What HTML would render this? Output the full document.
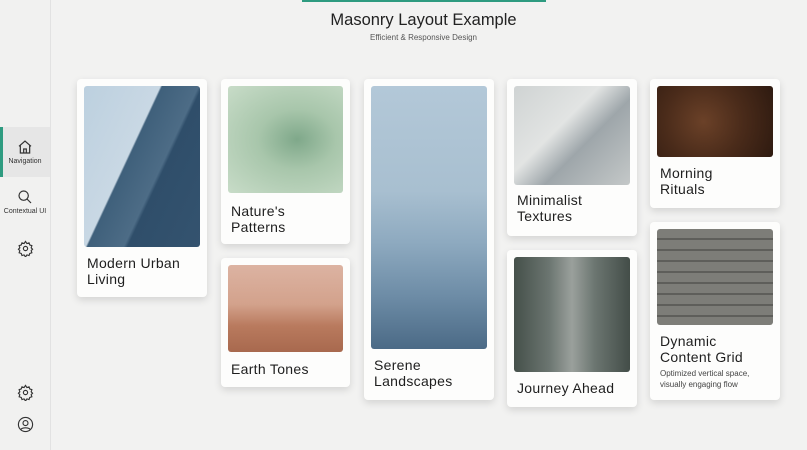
<!DOCTYPE html>
<html><head><style>
*{margin:0;padding:0;box-sizing:border-box}
body{width:807px;height:450px;background:#f2f2f1;font-family:"Liberation Sans",sans-serif;position:relative;overflow:hidden}
.side{position:absolute;left:0;top:0;width:51px;height:450px;border-right:1px solid #e2e2e2;background:#f1f1f0}
.ni{position:absolute;left:0;width:50px;text-align:center;font-size:7px;color:#333}
.ni svg{display:block;margin:0 auto 3px}
.card{position:absolute;background:#fdfdfc;border-radius:4px;box-shadow:0 3px 8px rgba(0,0,0,.13)}
.img{position:absolute;left:7px;top:7px;right:7px;border-radius:3px}
.t{position:absolute;left:10px;font-size:14px;line-height:16px;color:#1e1e1e;letter-spacing:.3px}
</style></head><body>
<div style="position:absolute;left:302px;top:0;width:244px;height:2px;background:#2e9b80"></div>
<div style="position:absolute;left:0;width:807px;top:11px;text-align:center;padding-left:40px;font-size:16.5px;color:#222">Masonry Layout Example</div>
<div style="position:absolute;left:0;width:807px;top:33px;text-align:center;padding-left:40px;font-size:8px;color:#555">Efficient &amp; Responsive Design</div>
<div class="side">
<div style="position:absolute;left:0;top:127px;width:50px;height:50px;background:#e6e6e6"></div>
<div style="position:absolute;left:0;top:127px;width:3px;height:50px;background:#2e9b80"></div>
<div class="ni" style="top:139px"><svg width="16" height="16" viewBox="0 0 24 24" fill="none" stroke="#333" stroke-width="1.8"><path d="M3 11L12 3l9 8M5 9v12h14V9M10 21v-6h4v6"/></svg>Navigation</div>
<div class="ni" style="top:189px"><svg width="16" height="16" viewBox="0 0 24 24" fill="none" stroke="#333" stroke-width="1.8"><circle cx="10" cy="10" r="7"/><path d="M15 15l6 6"/></svg>Contextual UI</div>
<div class="ni" style="top:240px"><svg width="17" height="17" viewBox="0 0 24 24" fill="none" stroke="#333" stroke-width="1.6"><circle cx="12" cy="12" r="3"/><path d="M12 2l2 3 3-1 1 3 3 1-1 3 2 2-2 2 1 3-3 1-1 3-3-1-2 3-2-3-3 1-1-3-3-1 1-3-2-2 2-2-1-3 3-1 1-3 3 1z"/></svg></div>
<div class="ni" style="top:384px"><svg width="17" height="17" viewBox="0 0 24 24" fill="none" stroke="#333" stroke-width="1.6"><circle cx="12" cy="12" r="3"/><path d="M12 2l2 3 3-1 1 3 3 1-1 3 2 2-2 2 1 3-3 1-1 3-3-1-2 3-2-3-3 1-1-3-3-1 1-3-2-2 2-2-1-3 3-1 1-3 3 1z"/></svg></div>
<div class="ni" style="top:416px"><svg width="17" height="17" viewBox="0 0 24 24" fill="none" stroke="#333" stroke-width="1.6"><circle cx="12" cy="12" r="10"/><circle cx="12" cy="10" r="3.5"/><path d="M5.5 19c2-3 11-3 13 0"/></svg></div>
</div>

<div class="card" style="left:77px;top:79px;width:130px;height:218px">
<div class="img" style="height:161px;background:linear-gradient(115deg,#bcd0df 0%,#c9d8e4 40%,#3f607b 41%,#4d6c86 60%,#2f4e6a 62%,#34536f 100%)"></div>
<div class="t" style="top:176px">Modern Urban<br>Living</div></div>

<div class="card" style="left:221px;top:79px;width:129px;height:165px">
<div class="img" style="height:107px;background:radial-gradient(ellipse at 60% 50%,#7fa88a 0%,#a8c6ab 40%,#c8dcc8 100%)"></div>
<div class="t" style="top:124px">Nature's<br>Patterns</div></div>

<div class="card" style="left:221px;top:258px;width:129px;height:129px">
<div class="img" style="height:87px;background:linear-gradient(180deg,#dcb3a2 0%,#d3a28c 45%,#b97a5e 70%,#a8694e 100%)"></div>
<div class="t" style="top:103px">Earth Tones</div></div>

<div class="card" style="left:364px;top:79px;width:130px;height:321px">
<div class="img" style="height:263px;background:linear-gradient(180deg,#b3c8d8 0%,#a8bfd0 40%,#8da9bf 60%,#6d8ca6 80%,#4b6a86 100%)"></div>
<div class="t" style="top:278px">Serene<br>Landscapes</div></div>

<div class="card" style="left:507px;top:79px;width:130px;height:157px">
<div class="img" style="height:99px;background:linear-gradient(135deg,#cfd3d3 0%,#e2e4e3 40%,#9ea6aa 60%,#c4c8c8 100%)"></div>
<div class="t" style="top:113px">Minimalist<br>Textures</div></div>

<div class="card" style="left:507px;top:250px;width:130px;height:157px">
<div class="img" style="height:115px;background:linear-gradient(90deg,#45504a 0%,#6b7570 30%,#9aa09c 50%,#6b7570 70%,#434d48 100%)"></div>
<div class="t" style="top:130px">Journey Ahead</div></div>

<div class="card" style="left:650px;top:79px;width:130px;height:129px">
<div class="img" style="height:71px;background:radial-gradient(circle at 40% 50%,#6b4128 0%,#4a2b1a 50%,#2e1a10 100%)"></div>
<div class="t" style="top:86px">Morning<br>Rituals</div></div>

<div class="card" style="left:650px;top:222px;width:130px;height:178px">
<div class="img" style="height:96px;background:repeating-linear-gradient(180deg,#7d7d78 0 9px,#5e5e5a 9px 11px),#777"></div>
<div class="t" style="top:111px">Dynamic<br>Content Grid</div>
<div style="position:absolute;left:10px;top:146px;font-size:8px;line-height:11px;color:#444">Optimized vertical space,<br>visually engaging flow</div></div>
</body></html>
